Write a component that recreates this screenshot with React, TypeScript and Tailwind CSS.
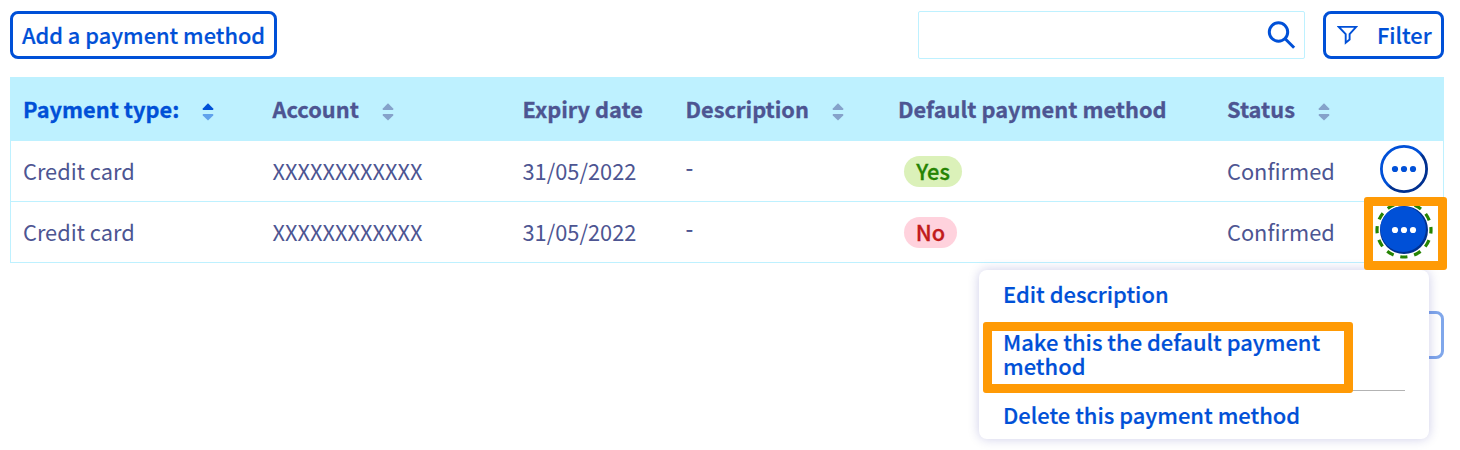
import React from "react";

const COLUMNS =
  "grid grid-cols-[249.5px_250px_163px_212.5px_329px_153px_1fr] pl-[12px]";

function SortIcon({ active = false }: { active?: boolean }) {
  return (
    <svg width="12" height="18" viewBox="0 0 12 18" className="mt-[6px]">
      <path
        d="M6 .3 11.2 5.4Q11.8 7 10.6 7H1.4Q.2 7 .8 5.4Z"
        fill={active ? "#0050d7" : "#85a2ca"}
      />
      <path
        d="M6 17.5.8 12.6Q.2 11 1.4 11H10.6Q11.8 11 11.2 12.6Z"
        fill={active ? "#60a2ec" : "#85a2ca"}
      />
    </svg>
  );
}

function HeaderCell({
  label,
  sort,
  active,
}: {
  label: string;
  sort?: boolean;
  active?: boolean;
}) {
  return (
    <div
      className={`flex items-center gap-[23px] font-bold whitespace-nowrap [-webkit-text-stroke:0.3px_currentColor] ${
        active ? "text-[#0050d7]" : "text-[#4d5592]"
      }`}
    >
      <span className="-mt-[2px]">{label}</span>
      {sort && <SortIcon active={active} />}
    </div>
  );
}

function ActionButton({ active = false }: { active?: boolean }) {
  return (
    <svg width="60" height="60" viewBox="0 0 60 60" className="-ml-[6px]">
      <defs>
        <linearGradient id="ring" x1="0.3" y1="0.3" x2="0.72" y2="0.72">
          <stop offset="0.48" stopColor="#0050d7" />
          <stop offset="0.6" stopColor="#00308f" />
        </linearGradient>
      </defs>
      {active ? (
        <>
          <circle
            cx="30"
            cy="30"
            r="27"
            fill="none"
            stroke="#268403"
            strokeWidth="3.2"
            strokeDasharray="7.4 6.737"
            strokeDashoffset="3.7"
          />
          <circle cx="30" cy="30" r="24" fill="#00308f" />
          <circle cx="29.1" cy="29.1" r="22.8" fill="#0050d7" />
        </>
      ) : (
        <circle
          cx="30"
          cy="30"
          r="22.6"
          fill="#fff"
          stroke="url(#ring)"
          strokeWidth="2.8"
        />
      )}
      <g fill={active ? "#fff" : "#0050d7"}>
        <circle cx="21" cy="30" r="3.1" />
        <circle cx="30" cy="30" r="3.1" />
        <circle cx="39" cy="30" r="3.1" />
      </g>
    </svg>
  );
}

function Row({ isDefault, active }: { isDefault: boolean; active?: boolean }) {
  return (
    <div
      className={`${COLUMNS} h-[61px] border-b border-[#bef1ff] text-[#4d5592]`}
    >
      <span className="pt-[14px]">Credit card</span>
      <span className="pt-[14px]">XXXXXXXXXXXX</span>
      <span className="pt-[14px]">31/05/2022</span>
      <span className="pt-[10px] font-medium">-</span>
      <span className="pt-[15px] pl-[6px]">
        <span
          className={`flex h-[31px] items-center justify-center rounded-full pb-[2px] font-medium [-webkit-text-stroke:0.3px_currentColor] ${
            isDefault
              ? "w-[58px] bg-[#dbf1b9] text-[#268403]"
              : "w-[53px] bg-[#ffd2dd] text-[#c11b1b]"
          }`}
        >
          {isDefault ? "Yes" : "No"}
        </span>
      </span>
      <span className="pt-[14px]">Confirmed</span>
      <span className="-mt-[2px]">
        <ActionButton active={active} />
      </span>
    </div>
  );
}

export default function App() {
  return (
    <div className="relative h-[450px] w-[1460px] overflow-hidden bg-white pt-[11px] pr-[16px] pl-[10px] font-['Noto_Sans_CJK_SC',sans-serif] text-[21.8px] leading-[31px] text-[#0050d7]">
      <div className="flex h-[48px]">
        <button className="flex w-[267px] items-center justify-center rounded-[8px] border-[3px] border-[#0050d7] pb-[2px] font-medium whitespace-nowrap [-webkit-text-stroke:0.2px_currentColor]">
          Add a payment method
        </button>
        <div className="ml-auto flex w-[387px] justify-end rounded-[2px] border border-[#bef1ff]">
          <svg
            width="30"
            height="30"
            viewBox="0 0 30 30"
            className="mt-[9px] mr-[7px]"
            fill="none"
            stroke="#0050d7"
            strokeWidth="3"
          >
            <circle cx="11.5" cy="11" r="9.2" />
            <path d="M18.1 17.8 27.1 26.8" />
          </svg>
        </div>
        <button className="ml-[18px] flex w-[121px] items-center rounded-[8px] border-[3px] border-[#0050d7] pb-[2px] pl-[11px] font-medium [-webkit-text-stroke:0.2px_currentColor]">
          <svg
            width="21"
            height="20"
            viewBox="0 0 21 20"
            className="mt-[2px]"
            fill="none"
            stroke="#0050d7"
            strokeWidth="1.9"
          >
            <path d="M1.8 1.9H19.2L12.6 9.2V14.6L8.7 17.8V9.2Z" />
          </svg>
          <span className="ml-[19px]">Filter</span>
        </button>
      </div>

      <div className="mt-[18px] border-x border-[#bef1ff]">
        <div className={`${COLUMNS} h-[64px] bg-[#bef1ff]`}>
          <HeaderCell label="Payment type:" sort active />
          <HeaderCell label="Account" sort />
          <HeaderCell label="Expiry date" />
          <HeaderCell label="Description" sort />
          <HeaderCell label="Default payment method" />
          <HeaderCell label="Status" sort />
        </div>
        <Row isDefault />
        <Row isDefault={false} active />
      </div>

      <div className="mt-[48px] ml-auto h-[48px] w-[120px] rounded-[8px] border-[3px] border-[#80a7eb]" />

      <div className="absolute top-[270px] left-[979px] h-[169px] w-[450px] rounded-[8px] bg-white px-[24px] pt-[12px] text-[21.95px] leading-[24px] font-medium shadow-[0_0_12px_0_rgba(0,0,140,0.2)] [-webkit-text-stroke:0.2px_currentColor]">
        <div>Edit description</div>
        <div className="mt-[24px] h-[61px] border-b border-[#b3b3b3]">
          <div className="w-[340px]">Make this the default payment method</div>
        </div>
        <div className="mt-[12px]">Delete this payment method</div>
      </div>

      <div className="absolute top-[197px] left-[1364px] h-[73px] w-[83px] rounded-[3px] border-[9px] border-[#ff9a05]" />
      <div className="absolute top-[322px] left-[983px] h-[71px] w-[370px] rounded-[3px] border-[9px] border-[#ff9a05]" />
    </div>
  );
}
